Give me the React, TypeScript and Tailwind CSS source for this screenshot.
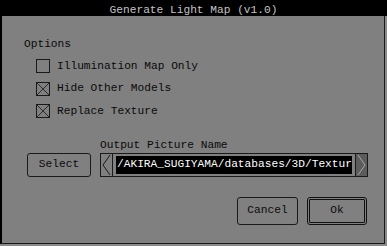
const mono = "font-['Liberation_Mono','DejaVu_Sans_Mono',monospace]";

const CheckBox = ({ checked }: { checked: boolean }) => (
    <div className="w-[14px] h-[14px] border border-[#1a1a1a] shrink-0">
        {checked && (
            <svg width="12" height="12" viewBox="0 0 12 12" className="block">
                <line x1="0" y1="0" x2="12" y2="12" stroke="#2a2a2a" strokeWidth="1" />
                <line x1="12" y1="0" x2="0" y2="12" stroke="#2a2a2a" strokeWidth="1" />
            </svg>
        )}
    </div>
);

const options = [
    { label: "Illumination Map Only", checked: false },
    { label: "Hide Other Models", checked: true },
    { label: "Replace Texture", checked: true },
];

export default function App() {
    return (
        <div className={`w-[387px] h-[246px] bg-[#8a8a8a] flex flex-col text-[11.2px] ${mono}`}>
            {/* Title bar */}
            <div className="h-[16px] bg-black flex items-center justify-center text-[#c4c4c4] leading-none pt-[5px]">
                Generate Light Map (v1.0)
            </div>

            {/* Dialog body */}
            <div className="w-[385px] h-[228px] bg-[#808080] border-l-2 border-black border-r border-b border-r-[#1a1a1a] border-b-[#1a1a1a] pl-[22px] pt-[22px] text-[#0a0a0a]">
                <div className="h-[13px] leading-[13px]">Options</div>

                <div className="mt-[4px] flex flex-col pl-[12px]">
                    {options.map((opt) => (
                        <div key={opt.label} className="h-[22.5px] flex items-center gap-[7px]">
                            <CheckBox checked={opt.checked} />
                            <span className="leading-none">{opt.label}</span>
                        </div>
                    ))}
                </div>

                <div className="mt-[16px] pl-[76px] h-[13px] leading-[13px]">Output Picture Name</div>

                <div className="mt-[1px] flex items-center">
                    <button className="ml-[3px] w-[64px] h-[24px] border border-[#1a1a1a] rounded-[3px] flex items-center justify-center text-[#0a0a0a]">
                        Select
                    </button>
                    <div className="ml-[9px] w-[268px] h-[24px] border border-[#1a1a1a] flex items-stretch">
                        <div className="w-[12px] border-r border-[#1a1a1a] flex items-center justify-center">
                            <svg width="9" height="20" viewBox="0 0 9 20" className="block">
                                <polyline points="8,0 1,10 8,20" fill="none" stroke="#1a1a1a" strokeWidth="1" />
                            </svg>
                        </div>
                        <div className="flex-1 flex items-center px-[3px]">
                            <div className="w-full h-[18px] bg-black text-white flex items-center overflow-hidden whitespace-nowrap leading-none pl-[1px]">
                                /AKIRA_SUGIYAMA/databases/3D/Textur
                            </div>
                        </div>
                        <div className="w-[12px] bg-[#5c5c5c] border-l border-[#1a1a1a] flex items-center justify-center">
                            <svg width="9" height="20" viewBox="0 0 9 20" className="block">
                                <polyline points="1,0 8,10 1,20" fill="none" stroke="#a8a8a8" strokeWidth="1" />
                            </svg>
                        </div>
                    </div>
                </div>

                <div className="mt-[20px] flex justify-end gap-[9px] pr-[17px]">
                    <button className="w-[61px] h-[28px] border border-[#1a1a1a] rounded-[3px] flex items-center justify-center text-[#0a0a0a]">
                        Cancel
                    </button>
                    <button className="w-[60px] h-[28px] border-[3px] border-double border-[#111] rounded-[3px] flex items-center justify-center text-[#0a0a0a]">
                        Ok
                    </button>
                </div>
            </div>
        </div>
    );
}
